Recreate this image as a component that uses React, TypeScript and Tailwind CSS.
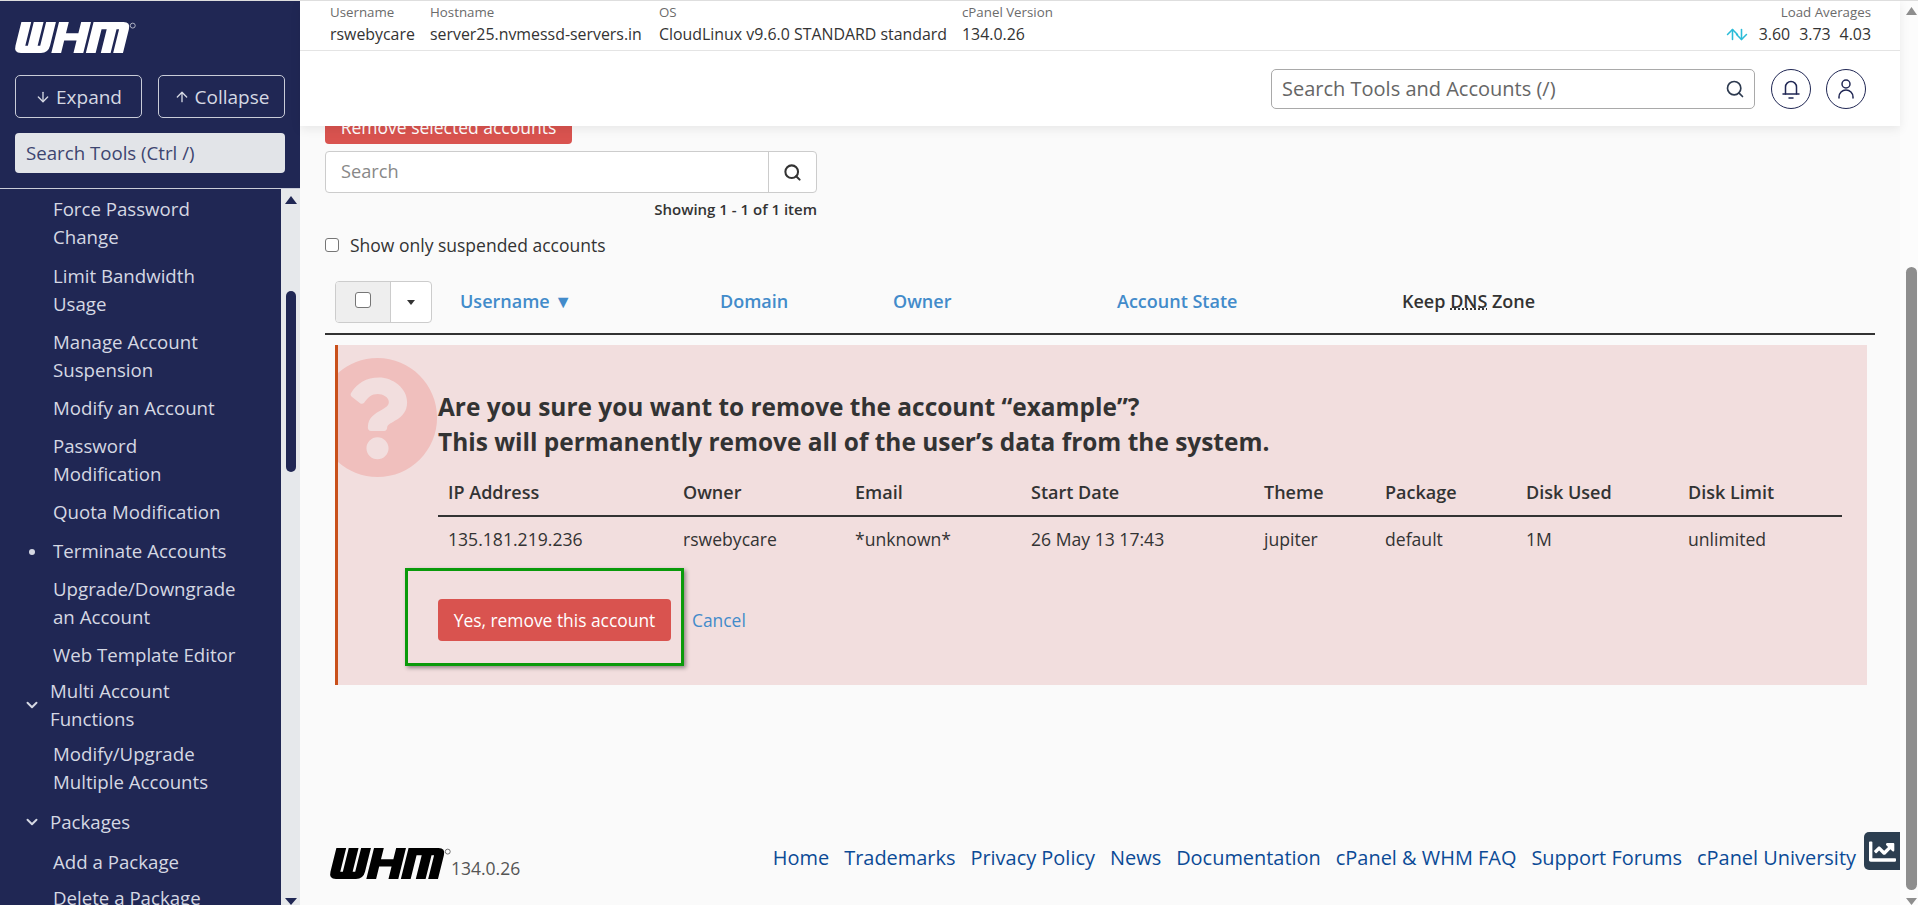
import React from "react";
import { ArrowDown, ArrowUp, ChevronDown, Search } from "lucide-react";
import { FaChartLine, FaQuestionCircle } from "react-icons/fa";

function WhmLogo({ className, fill, dot }: { className: string; fill: string; dot: string }) {
  return (
    <svg viewBox="0 0 120 32" className={className} aria-label="WHM logo">
      <g fill={fill} transform="translate(8 0) skewX(-14)">
        <path d="M0 0h9.5v23h2.5V0h9.5v23h2.5V0h9.5v23q0 7-7 7H7q-7 0-7-7z" />
        <path d="M36.5 0h9.5v11h12V0h9.5v30H58V18H46v12h-9.5z" />
        <path d="M70 0h29q7 0 7 7v23h-9.5V7H94v23h-9.5V7H79.500v23H70z" />
      </g>
      <circle cx="116" cy="3.5" r="2.4" fill="none" stroke={dot} strokeWidth="0.8" />
    </svg>
  );
}

const sideItems: { t: string; active?: boolean; head?: boolean; cls?: string }[] = [
  { t: "Force Password Change" },
  { t: "Limit Bandwidth Usage", cls: "mt-[1px]" },
  { t: "Manage Account Suspension" },
  { t: "Modify an Account" },
  { t: "Password Modification" },
  { t: "Quota Modification" },
  { t: "Terminate Accounts", active: true, cls: "mt-[1px]" },
  { t: "Upgrade/Downgrade an Account" },
  { t: "Web Template Editor" },
  { t: "Multi Account Functions", head: true, cls: "-mt-[2px] -mb-[3px]" },
  { t: "Modify/Upgrade Multiple Accounts", cls: "mb-[1px]" },
  { t: "Packages", head: true, cls: "mt-[2px] mb-[2px]" },
  { t: "Add a Package" },
  { t: "Delete a Package", cls: "-mt-[2px]" },
];

function Scrollbar({ w, arrowLeft, arrowW, arrowTop, thumbLeft, thumbW, thumbTop, thumbH, bg, thumb, arrow }: {
  w: number; arrowLeft: number; arrowW: number; arrowTop: number; thumbLeft: number; thumbW: number; thumbTop: number; thumbH: number; bg: string; thumb: string; arrow: string;
}) {
  return (
    <div className={`h-full shrink-0 relative ${bg}`} style={{ width: w }}>
      <svg viewBox="0 0 12 8" preserveAspectRatio="none" className="absolute h-[8px]" style={{ left: arrowLeft, top: arrowTop, width: arrowW }}><path d="M6 0L12 8H0z" fill={arrow} /></svg>
      <div className={`absolute rounded-full ${thumb}`} style={{ left: thumbLeft, width: thumbW, top: thumbTop, height: thumbH }} />
      <svg viewBox="0 0 12 8" preserveAspectRatio="none" className="absolute bottom-0 h-[7px]" style={{ left: arrowLeft, width: arrowW }}><path d="M6 8L12 0H0z" fill={arrow} /></svg>
    </div>
  );
}

function Sidebar() {
  return (
    <aside className="w-[300px] h-full shrink-0 flex flex-col bg-[#202754]">
      <div className="h-[187px] shrink-0 px-[15px] pt-[21px]">
        <WhmLogo className="w-[124px] h-[33px] -ml-[2px] block" fill="#ffffff" dot="#c9ccd8" />
        <div className="mt-[20px] flex gap-[16px]">
          <button className="w-[127px] h-[43px] pt-[1px] flex items-center justify-center gap-[5px] rounded-[5px] border border-[#c9ccd8] text-[19px] text-[#d5d8e3]">
            <ArrowDown size={16} />Expand
          </button>
          <button className="w-[127px] h-[43px] pt-[1px] flex items-center justify-center gap-[5px] rounded-[5px] border border-[#c9ccd8] text-[19px] text-[#d5d8e3]">
            <ArrowUp size={16} />Collapse
          </button>
        </div>
        <div className="mt-[15px] w-[270px] h-[40px] rounded-[4px] bg-[#e2e4e8] pl-[11px] flex items-center text-[18.67px] text-[#3d4570]">
          Search Tools (Ctrl /)
        </div>
      </div>
      <div className="h-[1px] bg-[#c9ccd8] shrink-0" />
      <div className="flex-1 flex min-h-0">
        <nav className="w-[281px] overflow-hidden pt-[1px]">
          {sideItems.map((it) =>
            it.head ? (
              <div key={it.t} className={`relative pl-[50px] pr-[41px] py-[5px] text-[18.67px] leading-[28px] text-[#d5d8e3] ${it.cls ?? ""}`}>
                <ChevronDown size={18} strokeWidth={2.6} className="absolute left-[23px] top-1/2 -translate-y-1/2" />
                {it.t}
              </div>
            ) : (
              <div key={it.t} className={`relative pl-[53px] pr-[38px] py-[5px] text-[18.67px] leading-[28px] text-[#d5d8e3] ${it.cls ?? ""}`}>
                {it.active && <span className="absolute left-[29px] top-[17px] w-[6px] h-[6px] rounded-full bg-[#d5d8e3]" />}
                {it.t}
              </div>
            )
          )}
        </nav>
        <Scrollbar w={19} arrowLeft={4} arrowW={12} arrowTop={7} thumbLeft={5} thumbW={10} thumbTop={102} thumbH={181} bg="bg-[#e6e8eb]" thumb="bg-[#202754]" arrow="#202754" />
      </div>
    </aside>
  );
}

function Meta({ label, value, w }: { label: string; value: string; w: string }) {
  return (
    <div className={w}>
      <div className="text-[13.3px] leading-[22px] text-[#6b6b6b]">{label}</div>
      <div className="text-[15.9px] leading-[22px] text-[#333]">{value}</div>
    </div>
  );
}

function BellIcon() {
  return (
    <svg viewBox="0 0 24 24" className="w-[24px] h-[24px]" fill="none" stroke="#202754" strokeWidth="1.5" strokeLinecap="round">
      <path d="M6.5 17V10a5.5 5.5 0 0111 0v7" />
      <path d="M4 17h16" />
      <path d="M10 21h4" />
    </svg>
  );
}

function UserIcon() {
  return (
    <svg viewBox="0 0 24 24" className="w-[24px] h-[24px]" fill="none" stroke="#202754" strokeWidth="1.5" strokeLinecap="round">
      <circle cx="12" cy="7" r="4" />
      <path d="M5 21v-1a7 7 0 0114 0v1" />
    </svg>
  );
}

function TopBar() {
  return (
    <header className="shrink-0 bg-white relative z-10 shadow-[0_3px_10px_rgba(0,0,0,0.08)]">
      <div className="h-[50px] border-b border-[#e4e4e4] flex items-start pl-[30px] pr-[29px]">
        <Meta label="Username" value="rswebycare" w="w-[100px]" />
        <Meta label="Hostname" value="server25.nvmessd-servers.in" w="w-[229px]" />
        <Meta label="OS" value="CloudLinux v9.6.0 STANDARD standard" w="w-[303px]" />
        <Meta label="cPanel Version" value="134.0.26" w="w-[120px]" />
        <div className="ml-auto text-right">
          <div className="text-[13.3px] leading-[22px] text-[#6b6b6b]">Load Averages</div>
          <div className="text-[15.9px] leading-[22px] text-[#333] flex items-center justify-end gap-[9px]">
            <span className="flex text-[#2bbcd8]"><ArrowUp size={17} strokeWidth={2.2} className="-mr-[8px]" /><ArrowDown size={17} strokeWidth={2.2} /></span>
            <span>3.60</span><span>3.73</span><span>4.03</span>
          </div>
        </div>
      </div>
      <div className="h-[75px] flex items-start justify-end pt-[18px] pr-[34px]">
        <div className="w-[484px] h-[40px] rounded-[5px] border border-[#a9a9a9] flex items-center justify-between pl-[10px] pr-[9px] text-[20px] text-[#666]">
          Search Tools and Accounts (/)
          <Search size={20} strokeWidth={2} className="text-[#2d3a4f]" />
        </div>
        <div className="ml-[16px] w-[40px] h-[40px] rounded-full border border-[#202754] flex items-center justify-center"><BellIcon /></div>
        <div className="ml-[15px] w-[40px] h-[40px] rounded-full border border-[#202754] flex items-center justify-center"><UserIcon /></div>
      </div>
    </header>
  );
}

const detailCols = [
  { h: "IP Address", v: "135.181.219.236", w: "w-[235px]" },
  { h: "Owner", v: "rswebycare", w: "w-[172px]" },
  { h: "Email", v: "*unknown*", w: "w-[176px]" },
  { h: "Start Date", v: "26 May 13 17:43", w: "w-[233px]" },
  { h: "Theme", v: "jupiter", w: "w-[121px]" },
  { h: "Package", v: "default", w: "w-[141px]" },
  { h: "Disk Used", v: "1M", w: "w-[162px]" },
  { h: "Disk Limit", v: "unlimited", w: "w-[150px]" },
];

function Alert() {
  return (
    <div className="relative ml-[10px] mr-[8px] h-[340px] bg-[#f2dede] border-l-[3px] border-[#c9501a] overflow-hidden">
      <FaQuestionCircle className="absolute left-[-22px] top-[11px] text-[#f0bfbd]" size={123} />
      <div className="relative pl-[100px] pr-[25px] pt-[44px]">
        <h2 className="text-[24.45px] leading-[35px] font-bold text-[#333]">
          Are you sure you want to remove the account “example”?<br />
          This will permanently remove all of the user’s data from the system.
        </h2>
        <div className="mt-[18px] flex border-b-2 border-[#333] pl-[10px] h-[40px]">
          {detailCols.map((c) => (
            <div key={c.h} className={`${c.w} shrink-0 text-[18px] leading-[30px] font-semibold text-[#333]`}>{c.h}</div>
          ))}
        </div>
        <div className="flex pl-[10px] h-[45px] items-center">
          {detailCols.map((c) => (
            <div key={c.h} className={`${c.w} shrink-0 text-[17.6px] text-[#333]`}>{c.v}</div>
          ))}
        </div>
        <div className="mt-[37px] flex items-center gap-[21px]">
          <button className="w-[233px] h-[42px] rounded-[4px] bg-[#d9534f] text-white text-[17.4px]">Yes, remove this account</button>
          <span className="text-[17.4px] text-[#428bca]">Cancel</span>
        </div>
      </div>
      <div className="absolute left-[67px] top-[223px] w-[279px] h-[98px] border-[3px] border-[#0a9a0a] shadow-[2px_2px_4px_rgba(0,0,0,0.4)]" />
    </div>
  );
}

function Th({ children, w }: { children: React.ReactNode; w: string }) {
  return <div className={`${w} shrink-0 -mt-[2px] text-[18px] font-semibold text-[#428bca]`}>{children}</div>;
}

function Content() {
  return (
    <div className="flex-1 min-h-0 overflow-hidden px-[25px]">
      <button className="-mt-[16px] block w-[247px] h-[34px] rounded-[4px] bg-[#d9534f] text-white text-[17.5px]">Remove selected accounts</button>
      <div className="mt-[7px] flex w-[492px] h-[42px] rounded-[4px] border border-[#ccc] bg-white">
        <div className="flex-1 flex items-center pl-[15px] text-[18.2px] text-[#888]">Search</div>
        <div className="w-[48px] border-l border-[#ccc] flex items-center justify-center text-[#333]"><Search size={19} strokeWidth={2.6} /></div>
      </div>
      <div className="w-[492px] mt-[5px] text-right text-[15px] leading-[22px] font-semibold text-[#333]">Showing 1 - 1 of 1 item</div>
      <label className="mt-[11px] flex items-center gap-[11px] text-[17.5px] leading-[28px] text-[#333]">
        <span className="w-[14px] h-[14px] rounded-[3px] border border-[#767676] bg-white" />Show only suspended accounts
      </label>
      <div className="mt-[22px] flex items-center h-[42px] pl-[10px]">
        <div className="w-[97px] h-[42px] mr-[28px] shrink-0 flex rounded-[4px] border border-[#ccc] bg-white overflow-hidden">
          <div className="w-[55px] bg-[#eeeeee] border-r border-[#ccc] flex items-center justify-center"><span className="w-[16px] h-[16px] -translate-y-[2px] rounded-[3px] border border-[#767676] bg-white" /></div>
          <div className="flex-1 flex items-center justify-center"><svg viewBox="0 0 8 5" className="w-[8px] h-[5px]"><path d="M0 0h8L4 5z" fill="#333" /></svg></div>
        </div>
        <Th w="w-[260px]">Username ▼</Th>
        <Th w="w-[173px]">Domain</Th>
        <Th w="w-[224px]">Owner</Th>
        <Th w="w-[285px]">Account State</Th>
        <div className="-mt-[2px] text-[18px] font-semibold text-[#333]">Keep <span className="underline decoration-dotted">DNS</span> Zone</div>
      </div>
      <div className="mt-[10px] h-[2px] bg-[#333]" />
      <div className="mt-[10px]"><Alert /></div>
    </div>
  );
}

function Footer() {
  const links = ["Home", "Trademarks", "Privacy Policy", "News", "Documentation", "cPanel & WHM FAQ", "Support Forums", "cPanel University"];
  return (
    <footer className="shrink-0 h-[75px] pl-[30px] relative flex items-start">
      <div className="flex items-end mt-[18px]">
        <WhmLogo className="w-[124px] h-[33px] -ml-[2px] block" fill="#000000" dot="#555" />
        <span className="-ml-[1px] mb-[1px] text-[17.5px] leading-[24px] text-[#555]">134.0.26</span>
      </div>
      <div className="absolute right-[44px] top-[14px] flex gap-[15px] text-[19.95px] leading-[28px] text-[#0b4a96]">
        {links.map((l) => <span key={l}>{l}</span>)}
      </div>
      <div className="absolute right-0 top-[2px] w-[36px] h-[38px] rounded-l-[5px] bg-[#2c3e50] flex items-center justify-center text-white"><FaChartLine size={27} /></div>
    </footer>
  );
}

export default function App() {
  return (
    <div className="h-[905px] w-full overflow-hidden flex bg-[#fafafa] border-t border-[#dedede] font-['Open_Sans',sans-serif]">
      <Sidebar />
      <main className="flex-1 min-w-0 h-full flex flex-col">
        <TopBar />
        <Content />
        <Footer />
      </main>
      <Scrollbar w={18} arrowLeft={6} arrowW={11} arrowTop={6} thumbLeft={6} thumbW={11} thumbTop={266} thumbH={623} bg="bg-[#fcfcfc]" thumb="bg-[#8e8e8e]" arrow="#8e8e8e" />
    </div>
  );
}
